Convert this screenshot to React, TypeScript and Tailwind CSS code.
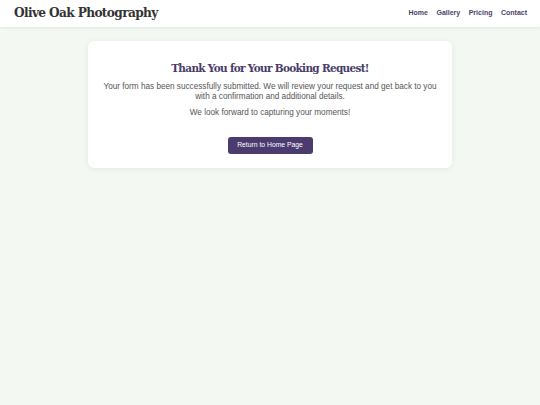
export default function App() {
  return (
    <div className="min-h-screen bg-[#f3f8f2] font-['Liberation_Sans',Arial,sans-serif]">
      <header className="flex h-[27px] items-center justify-between bg-white pr-[13px] pl-[14px] shadow-[0_1px_3px_rgba(0,0,0,0.08)]">
        <div className="font-['DejaVu_Serif',Georgia,serif] text-[12.2px] font-bold tracking-[-0.65px] text-[#333333]">
          Olive Oak Photography
        </div>
        <nav className="flex gap-[8.5px] text-[7px] font-bold text-[#4a3f6b]">
          <a href="#">Home</a>
          <a href="#">Gallery</a>
          <a href="#">Pricing</a>
          <a href="#">Contact</a>
        </nav>
      </header>

      <main className="flex justify-center pt-[14px]">
        <div className="w-[364px] rounded-[6px] bg-white px-[14px] pt-[20px] pb-[14px] text-center shadow-[0_1px_6px_rgba(0,0,0,0.07)]">
          <h1 className="font-['DejaVu_Serif',Georgia,serif] text-[10.5px] font-bold tracking-[-0.7px] text-[#4a3b6b]">
            Thank You for Your Booking Request!
          </h1>
          <p className="mt-[5px] text-[8.2px] leading-[10px] text-[#555555]">
            Your form has been successfully submitted. We will review your request and get back to you with a confirmation and additional details.
          </p>
          <p className="mt-[6px] text-[8.2px] leading-[10px] text-[#555555]">
            We look forward to capturing your moments!
          </p>
          <button className="mt-[19px] h-[17px] w-[85px] rounded-[3px] bg-[#4b3b6e] text-[6.8px] text-white">
            Return to Home Page
          </button>
        </div>
      </main>
    </div>
  );
}
